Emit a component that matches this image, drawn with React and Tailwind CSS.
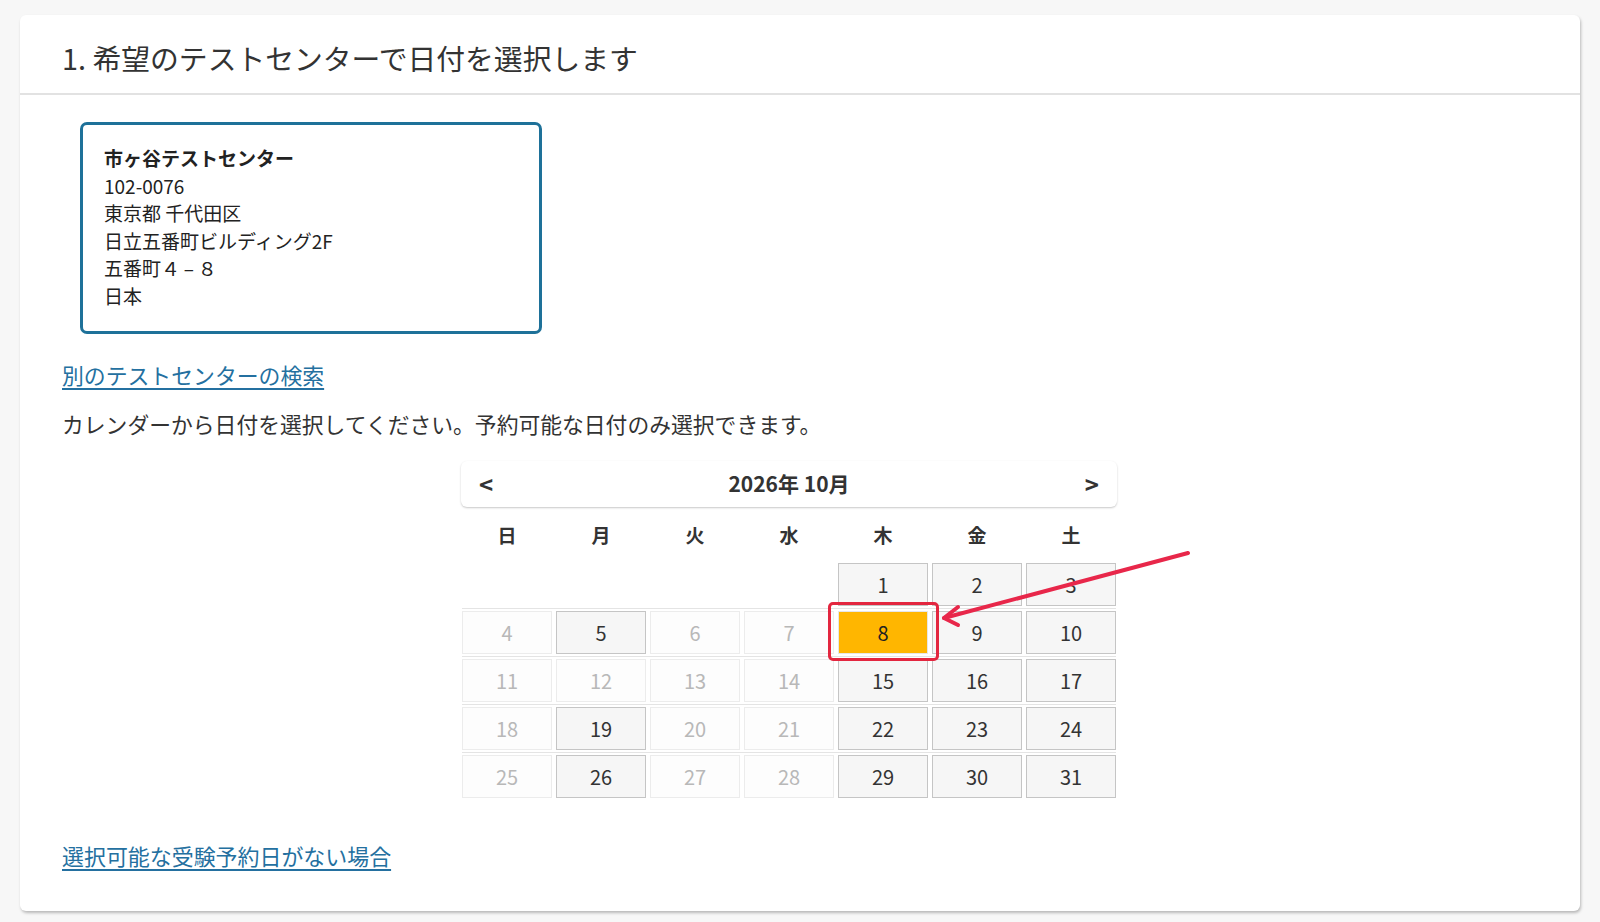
import React from 'react';

const FONT = "font-['Noto_Sans_CJK_JP','Noto_Sans',sans-serif]";

const WEEK = ['日', '月', '火', '水', '木', '金', '土'];

// null = blank, 'off' = not selectable, 'on' = selectable, 'sel' = picked
const ROWS = [
  [null, null, null, null, [1, 'on'], [2, 'on'], [3, 'on']],
  [[4, 'off'], [5, 'on'], [6, 'off'], [7, 'off'], [8, 'sel'], [9, 'on'], [10, 'on']],
  [[11, 'off'], [12, 'off'], [13, 'off'], [14, 'off'], [15, 'on'], [16, 'on'], [17, 'on']],
  [[18, 'off'], [19, 'on'], [20, 'off'], [21, 'off'], [22, 'on'], [23, 'on'], [24, 'on']],
  [[25, 'off'], [26, 'on'], [27, 'off'], [28, 'off'], [29, 'on'], [30, 'on'], [31, 'on']],
];

function DayCell({ cell }) {
  if (!cell) return <div className="h-[43px]" />;
  const [day, state] = cell;
  if (state === 'off') {
    return (
      <div className="h-[43px] flex items-center justify-center border border-[#ececec] bg-[#fdfdfd] text-[20px] text-[#b8b8b8]">
        {day}
      </div>
    );
  }
  if (state === 'sel') {
    return (
      <div className="relative h-[43px] flex items-center justify-center border border-[#e6e6e6] bg-[#ffb600] text-[20px] text-[#222]">
        {day}
        <div className="absolute -left-[11px] -right-[12px] -top-[10px] -bottom-[8px] rounded-[5px] border-[3px] border-[#e3263f]" />
      </div>
    );
  }
  return (
    <div className="h-[43px] flex items-center justify-center border border-[#c5c5c5] bg-[#f6f6f6] text-[20px] text-[#333]">
      {day}
    </div>
  );
}

function Calendar() {
  return (
    <div className="w-[656px] ml-[399px] mt-[21px]">
      <div className="h-[46px] flex items-center justify-between px-[18px] rounded-md bg-white shadow-[0_1px_2px_rgba(0,0,0,0.22)]">
        <span className="text-[24px] font-bold text-[#333]">&lt;</span>
        <span className="text-[21px] font-bold text-[#333]">2026年 10月</span>
        <span className="text-[24px] font-bold text-[#333]">&gt;</span>
      </div>
      <div className="w-[654px] ml-px">
        <div className="grid grid-cols-7 gap-x-[4px] h-[56px] items-center">
          {WEEK.map((w) => (
            <div key={w} className="text-center text-[19px] font-bold text-[#333]">
              {w}
            </div>
          ))}
        </div>
        {ROWS.map((row, i) => (
          <div key={i} className={i === 0 ? 'pb-[2px]' : 'pt-[2px] pb-[2px] border-t border-[#e4e4e4]'}>
            <div className="grid grid-cols-7 gap-x-[4px]">
              {row.map((c, j) => (
                <DayCell key={j} cell={c} />
              ))}
            </div>
          </div>
        ))}
      </div>
    </div>
  );
}

export default function App() {
  return (
    <div className={`${FONT} min-h-[922px] bg-[#f7f7f7] pt-[15px] px-[20px] text-[#333]`}>
      <div className="relative h-[896px] rounded-[6px] bg-white shadow-[1px_2px_3px_rgba(0,0,0,0.25)]">
        <div className="h-[80px] pl-[42px] pt-[23px] border-b-2 border-[#e2e2e2]">
          <h1 className="text-[28.8px] leading-[40px] font-normal text-[#333]">1. 希望のテストセンターで日付を選択します</h1>
        </div>

        <div className="pl-[42px]">
          <div className="ml-[18px] mt-[27px] w-[462px] h-[212px] rounded-[7px] border-[3px] border-[#1e7199] pl-[21px] pt-[19px] text-[19px] leading-[27.5px] text-[#222]">
            <div className="font-bold">市ヶ谷テストセンター</div>
            <div>102-0076</div>
            <div>東京都 千代田区</div>
            <div>日立五番町ビルディング2F</div>
            <div>五番町４{'\u2009–\u2009'}８</div>
            <div>日本</div>
          </div>

          <div className="mt-[25px] text-[21.85px] leading-[32px]">
            <a href="#" className="text-[#2470a0] underline underline-offset-[4px]">別のテストセンターの検索</a>
          </div>
          <p className="mt-[17px] text-[21.8px] leading-[32px] text-[#333]">
            カレンダーから日付を選択してください。予約可能な日付のみ選択できます。
          </p>

          <Calendar />

          <div className="mt-[40px] text-[21.95px] leading-[32px]">
            <a href="#" className="text-[#2470a0] underline underline-offset-[4px]">選択可能な受験予約日がない場合</a>
          </div>
        </div>

        {/* annotation arrow */}
        <svg className="absolute left-[900px] top-[520px]" width="310" height="120" viewBox="900 520 310 120">
          <g stroke="#e8274a" strokeWidth="4" strokeLinecap="round" strokeLinejoin="round" fill="none">
            <line x1="1168" y1="538" x2="924" y2="603" />
            <polyline points="938,592 924,603 938,610" />
          </g>
        </svg>
      </div>
    </div>
  );
}
